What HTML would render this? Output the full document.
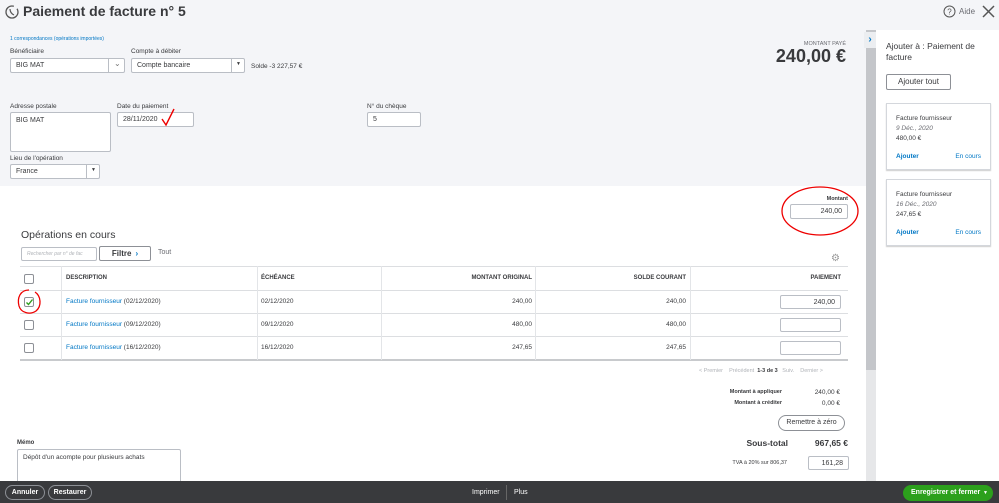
<!DOCTYPE html>
<html><head><meta charset="utf-8"><style>
*{box-sizing:border-box;margin:0;padding:0}
body{width:999px;height:503px;overflow:hidden;font-family:"Liberation Sans",sans-serif;color:#393a3d;background:#fff;position:relative;font-size:7px}
.a{position:absolute}
.inp{position:absolute;background:#fff;border:1px solid #babec5;border-radius:2px;font-size:7px;padding:0 5px;display:flex;align-items:center}
.lbl{position:absolute;font-size:6.5px;color:#393a3d}
.th{position:absolute;font-size:6px;font-weight:bold;top:275px}
.cb{position:absolute;width:10px;height:10px;border:1px solid #8d9096;border-radius:2px;background:#fff;left:24px}
.link{color:#0077c5}
.hl{position:absolute;left:20px;width:828px;height:1px;background:#dcdee1}
.vl{position:absolute;top:266px;width:1px;height:94px;background:#e3e5e8}
.td{position:absolute;font-size:6.5px}
</style></head><body>
<div class="a" style="left:0;top:0;width:866px;height:186px;background:#f4f5f8"></div>
<div class="a" style="left:866px;top:30px;width:10px;height:451px;background:#c4c6ca"></div>
<div class="a" style="left:866px;top:370px;width:10px;height:111px;background:#e6e7e9"></div>
<div class="a" style="left:866px;top:0;width:133px;height:30px;background:#f4f5f8"></div>
<div class="a" style="left:864px;top:32px;width:12px;height:16px;background:#eceef1;color:#0077c5;font-size:10px;font-weight:bold;text-align:center;line-height:16px">›</div>
<svg class="a" style="left:4px;top:4px" width="16" height="16" viewBox="0 0 16 16"><circle cx="8" cy="8" r="6" fill="none" stroke="#555" stroke-width="1.3" stroke-dasharray="30 4"/><path d="M6 5q0 4 4 6" stroke="#555" fill="none" stroke-width="1.2"/></svg>
<div class="a" style="left:23px;top:3px;font-size:14px;font-weight:bold;color:#393a3d">Paiement de facture n° 5</div>
<svg class="a" style="left:943px;top:5px" width="13" height="13"><circle cx="6.5" cy="6.5" r="5.5" fill="none" stroke="#555"/><text x="6.5" y="9.5" font-size="8" text-anchor="middle" fill="#555" font-family="Liberation Sans">?</text></svg>
<div class="a" style="left:959px;top:7px;font-size:8px;color:#6b6c72">Aide</div>
<svg class="a" style="left:982px;top:5px" width="13" height="13"><path d="M1 1L12 12M12 1L1 12" stroke="#555" stroke-width="1.5"/></svg>

<div class="a link" style="left:10px;top:36px;font-size:5px">1 correspondances (opérations importées)</div>
<div class="lbl" style="left:10px;top:48px">Bénéficiaire</div>
<div class="inp" style="left:10px;top:58px;width:115px;height:15px">BIG MAT</div>
<div class="a" style="left:108px;top:58px;width:1px;height:15px;background:#babec5"></div>
<div class="a" style="left:114px;top:59px;font-size:8px;color:#777">⌄</div>
<div class="lbl" style="left:131px;top:48px">Compte à débiter</div>
<div class="inp" style="left:131px;top:58px;width:114px;height:15px">Compte bancaire</div>
<div class="a" style="left:231px;top:58px;width:1px;height:15px;background:#babec5"></div>
<div class="a" style="left:236px;top:61px;font-size:5px">▼</div>
<div class="a" style="left:251px;top:63px;font-size:6.5px">Solde -3 227,57 €</div>
<div class="a" style="left:760px;top:41px;width:86px;text-align:right;font-size:5.5px;color:#6b6c72">MONTANT PAYÉ</div>
<div class="a" style="left:700px;top:46px;width:146px;text-align:right;font-size:18px;font-weight:bold">240,00 €</div>

<div class="lbl" style="left:10px;top:103px">Adresse postale</div>
<div class="inp" style="left:10px;top:112px;width:101px;height:40px;align-items:flex-start;padding-top:4px">BIG MAT</div>
<div class="lbl" style="left:117px;top:103px">Date du paiement</div>
<div class="inp" style="left:117px;top:112px;width:77px;height:15px">28/11/2020</div>
<svg class="a" style="left:160px;top:107px" width="16" height="20"><path d="M2 12L6 18L14 2" stroke="#e00" stroke-width="1.4" fill="none"/></svg>
<div class="lbl" style="left:367px;top:103px">N° du chèque</div>
<div class="inp" style="left:367px;top:112px;width:54px;height:15px">5</div>
<div class="lbl" style="left:10px;top:155px">Lieu de l'opération</div>
<div class="inp" style="left:10px;top:164px;width:90px;height:15px">France</div>
<div class="a" style="left:86px;top:164px;width:1px;height:15px;background:#babec5"></div>
<div class="a" style="left:91px;top:167px;font-size:5px">▼</div>

<div class="a" style="left:790px;top:196px;width:58px;text-align:right;font-size:5.5px;font-weight:bold">Montant</div>
<div class="inp" style="left:790px;top:204px;width:58px;height:15px;justify-content:flex-end">240,00</div>
<svg class="a" style="left:780px;top:184px" width="82" height="56"><ellipse cx="40" cy="27" rx="38" ry="24" fill="none" stroke="#e00" stroke-width="1.3"/></svg>

<div class="a" style="left:21px;top:229px;font-size:10.5px">Opérations en cours</div>
<div class="inp" style="left:21px;top:247px;width:76px;height:14px;color:#b0b3b8;font-size:5px;font-style:italic">Rechercher par n° de fac</div>
<div class="inp" style="left:99px;top:246px;width:52px;height:15px;justify-content:center;font-weight:bold;font-size:8px;border-color:#8d9096">Filtre <span style="color:#0077c5;margin-left:4px">›</span></div>
<div class="a" style="left:158px;top:249px;font-size:7px;color:#6b6c72">Tout</div>
<div class="a" style="left:831px;top:253px;font-size:10px;color:#999">⚙</div>

<div class="hl" style="top:266px"></div>
<div class="hl" style="top:290px"></div>
<div class="hl" style="top:313px"></div>
<div class="hl" style="top:336px"></div>
<div class="hl" style="top:359px;height:2px;background:#c8cacd"></div>
<div class="vl" style="left:61px"></div><div class="vl" style="left:257px"></div><div class="vl" style="left:381px"></div><div class="vl" style="left:535px"></div><div class="vl" style="left:690px"></div>
<div class="cb" style="top:274px"></div>
<div class="th" style="left:66px">DESCRIPTION</div>
<div class="th" style="left:261px">ÉCHÉANCE</div>
<div class="th" style="left:381px;width:151px;text-align:right">MONTANT ORIGINAL</div>
<div class="th" style="left:535px;width:151px;text-align:right">SOLDE COURANT</div>
<div class="th" style="left:690px;width:151px;text-align:right">PAIEMENT</div>

<div class="cb" style="top:297px"><svg width="9" height="9" style="position:absolute;left:0;top:0"><path d="M1.5 4.5L3.5 6.5L7.5 1.5" stroke="#2ca01c" stroke-width="1.4" fill="none"/></svg></div>
<svg class="a" style="left:16px;top:288px" width="27" height="28"><path d="M13 2C4 2 1 10 3 18 5 25 14 27 20 23 26 18 25 8 19 4" fill="none" stroke="#e00" stroke-width="1.3"/></svg>
<div class="td" style="left:66px;top:298px"><span class="link">Facture fournisseur</span> (02/12/2020)</div>
<div class="td" style="left:261px;top:298px">02/12/2020</div>
<div class="td" style="left:381px;top:298px;width:151px;text-align:right">240,00</div>
<div class="td" style="left:535px;top:298px;width:151px;text-align:right">240,00</div>
<div class="inp" style="left:780px;top:295px;width:61px;height:14px;justify-content:flex-end">240,00</div>

<div class="cb" style="top:320px"></div>
<div class="td" style="left:66px;top:321px"><span class="link">Facture fournisseur</span> (09/12/2020)</div>
<div class="td" style="left:261px;top:321px">09/12/2020</div>
<div class="td" style="left:381px;top:321px;width:151px;text-align:right">480,00</div>
<div class="td" style="left:535px;top:321px;width:151px;text-align:right">480,00</div>
<div class="inp" style="left:780px;top:318px;width:61px;height:14px"></div>

<div class="cb" style="top:343px"></div>
<div class="td" style="left:66px;top:344px"><span class="link">Facture fournisseur</span> (16/12/2020)</div>
<div class="td" style="left:261px;top:344px">16/12/2020</div>
<div class="td" style="left:381px;top:344px;width:151px;text-align:right">247,65</div>
<div class="td" style="left:535px;top:344px;width:151px;text-align:right">247,65</div>
<div class="inp" style="left:780px;top:341px;width:61px;height:14px"></div>

<div class="a" style="left:699px;top:368px;font-size:5.5px;color:#b0b3b8">&lt; Premier &nbsp;&nbsp; Précédent &nbsp;<b style="color:#393a3d">1-3 de 3</b> &nbsp;&nbsp;Suiv. &nbsp;&nbsp; Dernier &gt;</div>
<div class="a" style="left:700px;top:389px;width:82px;text-align:right;font-size:5.5px;font-weight:bold">Montant à appliquer</div>
<div class="a" style="left:800px;top:389px;width:40px;text-align:right;font-size:6.5px">240,00 €</div>
<div class="a" style="left:700px;top:400px;width:82px;text-align:right;font-size:5.5px;font-weight:bold">Montant à créditer</div>
<div class="a" style="left:800px;top:400px;width:40px;text-align:right;font-size:6.5px">0,00 €</div>
<div class="a" style="left:778px;top:415px;width:67px;height:16px;border:1px solid #8d9096;border-radius:8px;font-size:7px;text-align:center;line-height:14px">Remettre à zéro</div>
<div class="a" style="left:740px;top:438px;width:48px;text-align:right;font-size:8.5px;font-weight:bold">Sous-total</div>
<div class="a" style="left:800px;top:438px;width:48px;text-align:right;font-size:8.5px;font-weight:bold">967,65 €</div>
<div class="a" style="left:700px;top:460px;width:87px;text-align:right;font-size:5.5px">TVA à 20% sur 806,37</div>
<div class="inp" style="left:808px;top:456px;width:41px;height:14px;justify-content:flex-end">161,28</div>

<div class="lbl" style="left:17px;top:440px;font-weight:bold;font-size:6px">Mémo</div>
<div class="inp" style="left:17px;top:449px;width:164px;height:35px;align-items:flex-start;padding-top:4px;font-size:6.5px">Dépôt d'un acompte pour plusieurs achats</div>

<div class="a" style="left:877px;top:30px;width:122px;height:451px;background:#fff"></div>
<div class="a" style="left:886px;top:41px;font-size:8.5px;line-height:11px;width:105px">Ajouter à : Paiement de facture</div>
<div class="a" style="left:886px;top:74px;width:65px;height:16px;border:1px solid #8d9096;border-radius:2px;font-size:8px;text-align:center;line-height:14px">Ajouter tout</div>
<div class="a" style="left:886px;top:103px;width:105px;height:67px;border:1px solid #d4d7dc;box-shadow:0 1px 1px #ccc;padding:10px 9px;font-size:6.5px;line-height:10px">Facture fournisseur<br><i style="color:#6b6c72">9 Déc., 2020</i><br>480,00 €<div class="link" style="position:absolute;left:9px;top:48px;font-weight:bold">Ajouter</div><div class="link" style="position:absolute;right:9px;top:48px">En cours</div></div>
<div class="a" style="left:886px;top:179px;width:105px;height:67px;border:1px solid #d4d7dc;box-shadow:0 1px 1px #ccc;padding:10px 9px;font-size:6.5px;line-height:10px">Facture fournisseur<br><i style="color:#6b6c72">16 Déc., 2020</i><br>247,65 €<div class="link" style="position:absolute;left:9px;top:48px;font-weight:bold">Ajouter</div><div class="link" style="position:absolute;right:9px;top:48px">En cours</div></div>

<div class="a" style="left:0;top:481px;width:999px;height:22px;background:#393a3d"></div>
<div class="a" style="left:5px;top:485px;width:40px;height:15px;border:1px solid #8d9096;border-radius:8px;color:#fff;font-size:7px;font-weight:bold;text-align:center;line-height:13px">Annuler</div>
<div class="a" style="left:48px;top:485px;width:44px;height:15px;border:1px solid #8d9096;border-radius:8px;color:#fff;font-size:7px;font-weight:bold;text-align:center;line-height:13px">Restaurer</div>
<div class="a" style="left:472px;top:489px;color:#fff;font-size:7px">Imprimer</div>
<div class="a" style="left:506px;top:485px;width:1px;height:15px;background:#666"></div>
<div class="a" style="left:514px;top:489px;color:#fff;font-size:7px">Plus</div>
<div class="a" style="left:903px;top:485px;width:90px;height:16px;background:#2ca01c;border-radius:8px;color:#fff;font-size:7px;font-weight:bold;line-height:16px;padding-left:8px">Enregistrer et fermer <span style="position:absolute;right:5px;font-size:5px">▼</span></div>
</body></html>
